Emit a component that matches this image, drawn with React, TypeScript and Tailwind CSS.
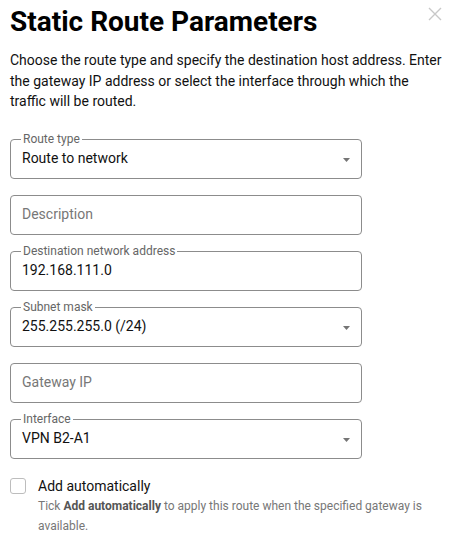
import { ReactNode } from 'react';

const font = { fontFamily: 'Roboto, "Noto Sans", sans-serif' };

function Caret() {
  return (
    <svg width="7" height="4" viewBox="0 0 7 4" className="absolute right-[11px] top-[18px]">
      <path d="M0 0 L7 0 L3.5 4 Z" fill="#757575" />
    </svg>
  );
}

interface FieldProps {
  label?: string;
  value?: string;
  placeholder?: string;
  select?: boolean;
}

function Field({ label, value, placeholder, select }: FieldProps) {
  return (
    <div className="relative h-[40px] w-[352px] rounded-[4px] border border-[#8c8c8c] flex items-center px-[11px]">
      {label && (
        <span className="absolute -top-[9px] left-[10px] bg-white px-[2px] text-[12px] leading-[16px] text-[#666]">
          {label}
        </span>
      )}
      {value ? (
        <span className="text-[14px] text-[#111]">{value}</span>
      ) : (
        <span className="text-[14px] text-[#777]">{placeholder}</span>
      )}
      {select && <Caret />}
    </div>
  );
}

function Row({ children }: { children: ReactNode }) {
  return <div>{children}</div>;
}

export default function App() {
  return (
    <div className="w-[450px] h-[538px] bg-white relative overflow-hidden" style={font}>
      <button className="absolute right-[8px] top-[7px] text-[#c8c8c8]">
        <svg width="14" height="14" viewBox="0 0 14 14">
          <path d="M1 1 L13 13 M13 1 L1 13" stroke="currentColor" strokeWidth="1.4" />
        </svg>
      </button>
      <div className="px-[10px] pt-[4px]">
        <h1 className="text-[28px] leading-[36px] font-bold text-black">Static Route Parameters</h1>
        <p className="mt-[10px] w-[436px] text-[14px] leading-[20.5px] text-[#111]">
          Choose the route type and specify the destination host address. Enter the gateway IP address or
          select the interface through which the traffic will be routed.
        </p>
        <div className="mt-[27px] flex flex-col gap-[16px]">
          <Row><Field label="Route type" value="Route to network" select /></Row>
          <Row><Field placeholder="Description" /></Row>
          <Row><Field label="Destination network address" value="192.168.111.0" /></Row>
          <Row><Field label="Subnet mask" value="255.255.255.0 (/24)" select /></Row>
          <Row><Field placeholder="Gateway IP" /></Row>
          <Row><Field label="Interface" value="VPN B2-A1" select /></Row>
        </div>
        <div className="mt-[19px] flex gap-[12px]">
          <span className="h-[16px] w-[16px] shrink-0 rounded-[3px] border border-[#bdbdbd]" />
          <div>
            <div className="text-[14px] leading-[17px] text-[#111]">Add automatically</div>
            <p className="mt-[1px] text-[12px] leading-[20px] text-[#777]">
              Tick <b className="font-bold text-[#555]">Add automatically</b> to apply this route when the specified
              gateway is available.
            </p>
          </div>
        </div>
      </div>
    </div>
  );
}
